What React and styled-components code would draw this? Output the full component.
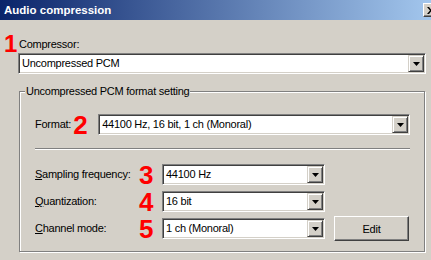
import { Fragment } from "react"
import styled, { createGlobalStyle } from "styled-components"

const GlobalStyle = createGlobalStyle`
  html, body {
    margin: 0;
    padding: 0;
    overflow: hidden;
    background: #d4d0c8;
  }
  body {
    font-family: "Liberation Sans", Arial, sans-serif;
    font-size: 11px;
    letter-spacing: -0.25px;
    color: #000;
  }
`

const Window = styled.div`
  box-sizing: border-box;
  display: flex;
  flex-direction: column;
  width: 441px;
  height: 260px;
  background: #d4d0c8;
`

const TitleBar = styled.div`
  display: flex;
  align-items: center;
  height: 20px;
  padding: 0 2px 0 4px;
  background: linear-gradient(to right, #0a246a, #a6caf0);
  color: #fff;
  font-weight: bold;
  font-size: 11.5px;
  letter-spacing: 0;
`

const Title = styled.div`
  flex: 1;
`

const raised = `
  box-sizing: border-box;
  background: #d4d0c8;
  border: 1px solid;
  border-color: #fff #404040 #404040 #fff;
  box-shadow: inset -1px -1px 0 #808080;
`

const CloseButton = styled.div`
  ${raised}
  display: flex;
  align-items: center;
  justify-content: center;
  width: 16px;
  height: 14px;
`

const Body = styled.div`
  display: flex;
  flex-direction: column;
  padding: 0 15px 0 4px;
`

const Head = styled.div`
  display: flex;
  align-items: flex-end;
  height: 18px;
  margin-top: 15px;
`

const Digit = styled.span`
  display: inline-block;
  grid-column: 2;
  width: ${(p) => p.$width || 15}px;
  margin-left: ${(p) => p.$left || 0}px;
  color: #ff0000;
  font-weight: bold;
  font-size: ${(p) => (p.$small ? 24 : 26)}px;
  line-height: ${(p) => (p.$small ? 18 : 20)}px;
  letter-spacing: 0;
`

const Label = styled.span`
  grid-column: 1;
  line-height: 13px;
  margin-bottom: ${(p) => p.$drop || 0}px;
  white-space: nowrap;
`

const ComboBox = styled.div`
  box-sizing: border-box;
  display: flex;
  grid-column: 3;
  flex: ${(p) => (p.$grow ? 1 : "none")};
  height: 21px;
  width: ${(p) => (p.$width ? `${p.$width}px` : "auto")};
  margin-left: ${(p) => p.$left || 0}px;
  padding: 1px;
  background: #fff;
  border: 1px solid;
  border-color: #808080 #fff #fff #808080;
  box-shadow: inset 1px 1px 0 #404040, inset -1px -1px 0 #d4d0c8;
`

const ComboText = styled.div`
  flex: 1;
  padding-left: 2px;
  line-height: 17px;
  white-space: nowrap;
  overflow: hidden;
`

const DropButton = styled.div`
  ${raised}
  display: flex;
  align-items: center;
  justify-content: center;
  width: 16px;
  height: 17px;
  border-color: #d4d0c8 #404040 #404040 #d4d0c8;
  box-shadow: inset 1px 1px 0 #fff, inset -1px -1px 0 #808080;
`

const Group = styled.fieldset`
  box-sizing: border-box;
  margin: 11px 1px 0 15px;
  padding: 0;
  min-width: 0;
  border: 1px solid #808080;
  box-shadow: 1px 1px 0 #fff, inset 1px 1px 0 #fff;
`

const Legend = styled.legend`
  margin-left: 5px;
  padding: 0 1px;
  line-height: 13px;
  background: #d4d0c8;
`

const GroupContent = styled.div`
  display: flex;
  flex-direction: column;
  padding: 16px 14px 12px 15px;
`

const FormatRow = styled.div`
  display: flex;
  align-items: center;
  height: 21px;
`

const Separator = styled.div`
  margin-top: 13px;
  border-top: 1px solid #808080;
  border-bottom: 1px solid #fff;
`

const Settings = styled.div`
  display: grid;
  grid-template-columns: 104px 23px 163px 9px 75px;
  grid-template-rows: repeat(3, 21px);
  row-gap: 6px;
  align-items: center;
  margin-top: 14px;
`

const EditButton = styled.button`
  ${raised}
  grid-column: 5;
  grid-row: 3;
  align-self: center;
  width: 75px;
  height: 25px;
  padding: 0;
  font: inherit;
  letter-spacing: inherit;
  color: #000;
`

const Arrow = () => (
  <svg width="7" height="4" viewBox="0 0 7 4">
    <polygon points="0,0 7,0 3.5,4" fill="#000" />
  </svg>
)

const Combo = ({ children, ...rest }) => (
  <ComboBox {...rest}>
    <ComboText>{children}</ComboText>
    <DropButton>
      <Arrow />
    </DropButton>
  </ComboBox>
)

const settings = [
  { key: "S", rest: "ampling frequency:", digit: "3", value: "44100 Hz" },
  { key: "Q", rest: "uantization:", digit: "4", value: "16 bit" },
  { key: "C", rest: "hannel mode:", digit: "5", value: "1 ch (Monoral)" },
]

const App = () => {
  return (
    <Window>
      <GlobalStyle />
      <TitleBar>
        <Title>Audio compression</Title>
        <CloseButton>
          <svg width="8" height="7" viewBox="0 0 8 7">
            <path d="M0 0 L2 0 L4 2.5 L6 0 L8 0 L5 3.5 L8 7 L6 7 L4 4.5 L2 7 L0 7 L3 3.5 Z" fill="#000" />
          </svg>
        </CloseButton>
      </TitleBar>
      <Body>
        <Head>
          <Digit $small>1</Digit>
          <Label $drop={2}>Compressor:</Label>
        </Head>
        <Combo $left={14}>Uncompressed PCM</Combo>
        <Group>
          <Legend>Uncompressed PCM format setting</Legend>
          <GroupContent>
            <FormatRow>
              <Label>Format:</Label>
              <Digit $width={25} $left={2}>2</Digit>
              <Combo $grow>44100 Hz, 16 bit, 1 ch (Monoral)</Combo>
            </FormatRow>
            <Separator />
            <Settings>
              {settings.map((s) => (
                <Fragment key={s.key}>
                  <Label>
                    <u>{s.key}</u>
                    {s.rest}
                  </Label>
                  <Digit>{s.digit}</Digit>
                  <Combo $width={163}>{s.value}</Combo>
                </Fragment>
              ))}
              <EditButton>Edit</EditButton>
            </Settings>
          </GroupContent>
        </Group>
      </Body>
    </Window>
  )
}

export default App
